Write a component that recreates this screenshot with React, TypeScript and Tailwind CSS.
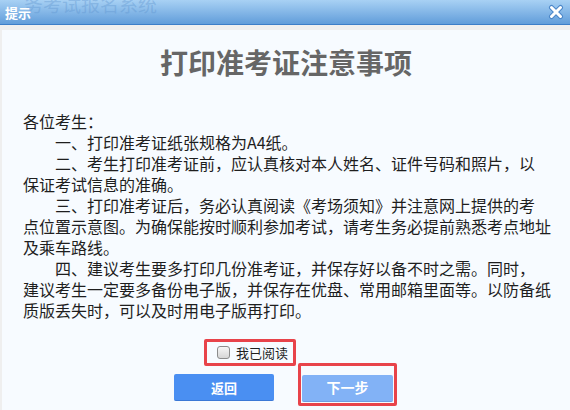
export default function App() {
  return (
    <div className="w-[570px] h-[410px] overflow-hidden bg-[#f7fbff] font-['Noto_Sans_CJK_SC',sans-serif]">
      {/* HEADER */}
      <div className="relative h-[25px] overflow-hidden bg-gradient-to-b from-[#a8d1f4] to-[#619dda] border-b border-[#3c7ec8] flex items-center justify-between pl-[5px] pr-[6px]">
        <span className="absolute left-[24px] -top-[8px] text-[19px] leading-[24px] text-[#5f95cf]/40 whitespace-nowrap">
          务考试报名系统
        </span>
        <span className="relative text-[13px] font-bold text-white leading-none">提示</span>
        <svg className="relative w-[16px] h-[16px]" viewBox="0 0 16 16">
          <path d="M3.5 3.5l9 9M12.5 3.5l-9 9" stroke="#4b86c8" strokeWidth="5" strokeLinecap="round" />
          <path d="M3.5 3.5l9 9M12.5 3.5l-9 9" stroke="#ffffff" strokeWidth="3" strokeLinecap="round" />
        </svg>
      </div>

      {/* BODY */}
      <div className="h-[385px] border-t-[5px] border-l-2 border-[#efefef] flex flex-col">
        {/* TITLE */}
        <h1 className="mt-[14px] text-center text-[28px] leading-[36px] font-bold text-[#666666]">
          打印准考证注意事项
        </h1>

        {/* TEXT */}
        <div className="mt-[31px] pl-[21px] text-[16px] leading-[21px] text-[#1e1e1e] whitespace-nowrap">
          <p>各位考生：</p>
          <p className="pl-[32px]">一、打印准考证纸张规格为A4纸。</p>
          <p className="pl-[32px]">二、考生打印准考证前，应认真核对本人姓名、证件号码和照片，以</p>
          <p>保证考试信息的准确。</p>
          <p className="pl-[32px]">三、打印准考证后，务必认真阅读《考场须知》并注意网上提供的考</p>
          <p>点位置示意图。为确保能按时顺利参加考试，请考生务必提前熟悉考点地址</p>
          <p>及乘车路线。</p>
          <p className="pl-[32px]">四、建议考生要多打印几份准考证，并保存好以备不时之需。同时，</p>
          <p>建议考生一定要多备份电子版，并保存在优盘、常用邮箱里面等。以防备纸</p>
          <p>质版丢失时，可以及时用电子版再打印。</p>
        </div>

        {/* CHECKBOX */}
        <div className="mt-[18px] pl-[215px] flex">
          <label className="relative flex items-center gap-[6px] h-[27px] pr-[2px] text-[13px] text-[#1e1e1e]">
            <span className="w-[13px] h-[13px] rounded-[3px] border border-[#8c8c8c] bg-gradient-to-b from-[#f6f6f6] to-[#d6d6d6]" />
            我已阅读
            <span className="absolute -left-[13px] -right-[6px] top-0 bottom-0 rounded-[2px] border-[3px] border-[#e8434a]" />
          </label>
        </div>

        {/* BUTTONS */}
        <div className="mt-[8px] pl-[172px] flex items-center gap-[28px]">
          <button className="w-[100px] h-[27px] rounded-[2px] bg-[#4a8ff2] border-b border-[#3b78d6] text-white text-[13px] font-bold">
            返回
          </button>
          <div className="relative">
            <button className="w-[91px] h-[27px] rounded-[2px] bg-[#82b2f6] border-b border-[#6f9de2] text-white text-[14px] font-bold">
              下一步
            </button>
            <span className="absolute -left-[4px] -right-[4px] -top-[11px] -bottom-[4px] rounded-[2px] border-[3px] border-[#e8434a]" />
          </div>
        </div>
      </div>
    </div>
  );
}
